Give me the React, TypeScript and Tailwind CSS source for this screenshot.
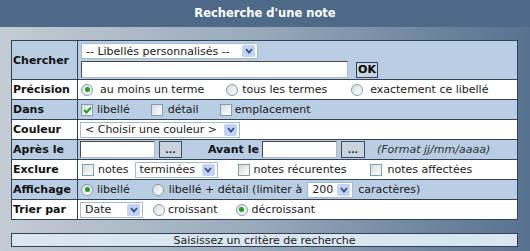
import type { ReactNode } from "react";

const font = "font-['DejaVu_Sans',Verdana,sans-serif]";

function Radio({ checked = false, className = "" }: { checked?: boolean; className?: string }) {
  return (
    <span
      className={`flex h-[12px] w-[12px] shrink-0 items-center justify-center rounded-full border border-[#7f9db9] bg-gradient-to-br from-[#dcdcd6] to-white ${className}`}
    >
      {checked && <span className="h-[5px] w-[5px] rounded-full bg-[#21a121]" />}
    </span>
  );
}

function Check({ checked = false, className = "" }: { checked?: boolean; className?: string }) {
  return (
    <span
      className={`flex h-[12px] w-[12px] shrink-0 items-center justify-center border border-[#7f9db9] bg-gradient-to-br from-[#dcdcd6] to-white ${className}`}
    >
      {checked && (
        <svg width="9" height="8" viewBox="0 0 9 8">
          <path d="M1 4 L3.5 6.5 L8 1.5" fill="none" stroke="#21a121" strokeWidth="2" />
        </svg>
      )}
    </span>
  );
}

function Select({ label, className = "" }: { label: string; className?: string }) {
  return (
    <div
      className={`flex h-[16px] shrink-0 items-center border border-[#a5b9d1] bg-white pl-[4px] pr-[2px] ${className}`}
    >
      <span className="whitespace-pre">{label}</span>
      <span className="ml-auto flex h-[12px] w-[13px] items-center justify-center rounded-[2px] bg-[#c3d3f5]">
        <svg width="8" height="6" viewBox="0 0 8 6">
          <path d="M1 1 L4 4.5 L7 1" fill="none" stroke="#2c4d8c" strokeWidth="1.8" />
        </svg>
      </span>
    </div>
  );
}

function Input({ className = "" }: { className?: string }) {
  return (
    <span
      className={`h-[17px] shrink-0 border border-t-[#4a4a4a] border-l-[#4a4a4a] border-r-[#b8b8b8] border-b-[#b8b8b8] bg-white ${className}`}
    />
  );
}

function Dots({ className = "" }: { className?: string }) {
  return (
    <span
      className={`flex h-[17px] w-[23px] shrink-0 items-end justify-center border border-[#3c4e66] bg-[#c9d4df] pb-[2px] text-[9px] font-bold leading-none ${className}`}
    >
      ...
    </span>
  );
}

function Row({
  label,
  blue,
  h = "h-[20px]",
  first = false,
  children,
}: {
  label: string;
  blue: boolean;
  h?: string;
  first?: boolean;
  children: ReactNode;
}) {
  return (
    <div
      className={`flex ${h} ${first ? "" : "border-t border-[#2f435c]"} ${blue ? "bg-[#b9cde3]" : "bg-white"}`}
    >
      <div className="flex w-[66px] shrink-0 items-center border-r border-[#2f435c] pl-[1px] font-bold text-[#111]">
        {label}
      </div>
      <div className="flex flex-1 items-center">{children}</div>
    </div>
  );
}

export default function App() {
  return (
    <div
      className={`flex h-[251px] w-[530px] flex-col overflow-hidden bg-gradient-to-r from-[#c4ccd4] via-[#97a8b9] to-[#57718f] text-[11px] leading-none text-[#1a1a1a] ${font}`}
    >
      <div className="flex h-[27px] shrink-0 items-center justify-center bg-[#4d6a88] text-[11.5px] font-bold text-white">
        Recherche d'une note
      </div>

      <div className="ml-[11px] mt-[13px] w-[507px] border border-[#2f435c]">
        <Row label="Chercher" blue h="h-[38px]" first>
          <div className="flex flex-col pl-[3px]">
            <Select label="-- Libellés personnalisés --" className="mt-[1px] w-[177px]" />
            <div className="mt-[2px] flex items-center">
              <Input className="w-[267px]" />
              <span className="ml-[8px] flex h-[16px] w-[22px] items-center justify-center border border-[#2f435c] bg-[#c9d4df] font-bold text-black">
                OK
              </span>
            </div>
          </div>
        </Row>

        <Row label="Précision" blue={false}>
          <Radio checked className="ml-[3px]" />
          <span className="ml-[7px]">au moins un terme</span>
          <Radio className="ml-[22px]" />
          <span className="ml-[4px]">tous les termes</span>
          <Radio className="ml-[24px]" />
          <span className="ml-[7px]">exactement ce libellé</span>
        </Row>

        <Row label="Dans" blue>
          <Check checked className="ml-[3px]" />
          <span className="ml-[4px]">libellé</span>
          <Check className="ml-[21px]" />
          <span className="ml-[5px]">détail</span>
          <Check className="ml-[21px]" />
          <span className="ml-[3px]">emplacement</span>
        </Row>

        <Row label="Couleur" blue={false}>
          <Select label="< Choisir une couleur >" className="ml-[2px] w-[160px]" />
        </Row>

        <Row label="Après le" blue>
          <Input className="ml-[2px] w-[75px]" />
          <Dots className="ml-[4px]" />
          <span className="ml-[26px] font-bold text-[#111]">Avant le</span>
          <Input className="ml-[3px] w-[75px]" />
          <Dots className="ml-[4px] w-[24px]" />
          <span className="ml-[12px] italic text-[#333]">(Format jj/mm/aaaa)</span>
        </Row>

        <Row label="Exclure" blue={false}>
          <Check className="ml-[4px]" />
          <span className="ml-[4px]">notes</span>
          <Select label="terminées" className="ml-[6px] w-[83px]" />
          <Check className="ml-[20px]" />
          <span className="ml-[4px]">notes récurentes</span>
          <Check className="ml-[24px]" />
          <span className="ml-[5px]">notes affectées</span>
        </Row>

        <Row label="Affichage" blue>
          <Radio checked className="ml-[3px]" />
          <span className="ml-[4px]">libellé</span>
          <Radio className="ml-[22px]" />
          <span className="ml-[5px]">libellé + détail (limiter à</span>
          <Select label="200" className="ml-[5px] w-[46px]" />
          <span className="ml-[5px]">caractères)</span>
        </Row>

        <Row label="Trier par" blue={false}>
          <Select label="Date" className="ml-[2px] w-[63px]" />
          <Radio className="ml-[10px]" />
          <span className="ml-[3px]">croissant</span>
          <Radio checked className="ml-[18px]" />
          <span className="ml-[4px]">décroissant</span>
        </Row>
      </div>

      <div className="ml-[11px] mt-[13px] flex h-[14px] w-[507px] items-center justify-center border border-[#2f435c] bg-[#d9e5ef] text-[#222]">
        Saisissez un critère de recherche
      </div>
    </div>
  );
}
